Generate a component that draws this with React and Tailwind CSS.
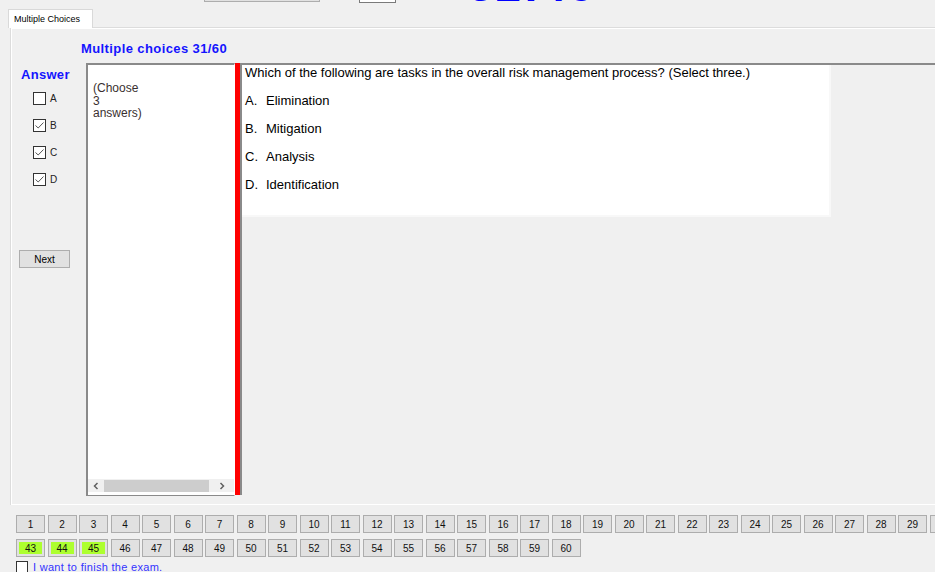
import React from 'react';

const sans = { fontFamily: '"Liberation Sans", Arial, sans-serif' };

const Check = ({ checked }) => (
    <div className="w-[13px] h-[13px] border border-[#333] bg-white flex items-center justify-center">
        {checked && (
            <svg width="11" height="11" viewBox="0 0 11 11">
                <path d="M1.5 5.5 L4.2 8 L9.5 2.5" fill="none" stroke="#555" strokeWidth="1" />
            </svg>
        )}
    </div>
);

const NumButton = ({ n, done }) => (
    <div className="w-[29px] h-[18px] shrink-0 border border-[#adadad] bg-[#e1e1e1] p-[2px] flex">
        <div className={`flex-1 flex items-center justify-center text-[10px] text-[#111] ${done ? 'bg-[#adff2f]' : ''}`}>{n}</div>
    </div>
);

const Arrow = ({ dir }) => (
    <svg width="8" height="8" viewBox="0 0 8 8">
        <path d={dir === 'left' ? 'M5.5 1 L2.5 4 L5.5 7' : 'M2.5 1 L5.5 4 L2.5 7'} fill="none" stroke="#606060" strokeWidth="1.5" />
    </svg>
);

const App = () => {
    const row1 = Array.from({ length: 30 }, (_, i) => i + 1);
    const row2 = Array.from({ length: 18 }, (_, i) => i + 43);
    const options = [['A.', 'Elimination'], ['B.', 'Mitigation'], ['C.', 'Analysis'], ['D.', 'Identification']];

    return (
        <div className="w-[935px] h-[572px] bg-[#f0f0f0] overflow-hidden text-black" style={sans}>
            {/* clipped strip at the top */}
            <div className="h-[9px] overflow-hidden flex items-start">
                <div className="ml-[204px] w-[116px] h-[2px] border-b border-x border-[#adadad] bg-[#e1e1e1]" />
                <div className="ml-[39px] w-[37px] h-[3px] border-b border-x border-[#7a7a7a] bg-white" />
                <div className="ml-[72px] -mt-[32px] text-[46px] leading-[34px] font-bold text-[#0000ff] tracking-[2px]">32:46</div>
            </div>

            {/* tab */}
            <div className="h-[18px] flex">
                <div className="ml-[8px] w-[85px] h-[19px] bg-white border border-b-0 border-[#d9d9d9] text-[9px] pl-[5px] pt-[3px] relative z-10">Multiple Choices</div>
            </div>

            {/* tab panel */}
            <div className="ml-[10px] h-[478px] border-t border-[#d9d9d9] border-l border-[#dcdcdc]">
                <div className="h-full border-t border-l border-white border-b">
                    <div className="h-[34px] pl-[69px] pt-[13px] text-[13px] leading-[14px] font-bold text-[#1414ff] tracking-[0.4px]">Multiple choices 31/60</div>

                    <div className="flex h-[433px]">
                        {/* answer column */}
                        <div className="w-[74px] shrink-0 pt-[5px]">
                            <div className="pl-[9px] text-[13px] leading-[14px] font-bold text-[#1414ff] tracking-[0.3px]">Answer</div>
                            <div className="pl-[21px] mt-[10px] flex flex-col gap-[14px]">
                                {[['A', false], ['B', true], ['C', true], ['D', true]].map(([l, c]) => (
                                    <div key={l} className="flex items-center gap-[4px] h-[13px]">
                                        <Check checked={c} />
                                        <span className="text-[10px] text-[#222]">{l}</span>
                                    </div>
                                ))}
                            </div>
                            <div className="ml-[7px] mt-[64px] w-[51px] h-[18px] border border-[#adadad] bg-[#e1e1e1] flex items-center justify-center text-[10px]">Next</div>
                        </div>

                        {/* left text box */}
                        <div className="w-[149px] shrink-0 border-l-2 border-t-2 border-[#8a8a8a] border-b border-r border-r-white bg-white flex flex-col">
                            <div className="flex-1 pl-[5px] pt-[17px] text-[12px] leading-[12.5px] text-[#3a3030]">
                                (Choose<br />3<br />answers)
                            </div>
                            <div className="h-[13px] mb-[3px] bg-[#f0f0f0] flex items-center">
                                <div className="w-[16px] flex justify-center"><Arrow dir="left" /></div>
                                <div className="w-[105px] h-[12px] bg-[#cdcdcd]" />
                                <div className="flex-1 flex justify-center"><Arrow dir="right" /></div>
                            </div>
                        </div>

                        {/* red bar */}
                        <div className="w-[5px] shrink-0 bg-[#ff0000] h-[432px]" />

                        {/* question area */}
                        <div className="flex-1 h-[432px] border-l-2 border-t-2 border-[#8a8a8a]">
                            <div className="w-[589px] bg-white border-r-2 border-b-2 border-[#f8f8f8] pb-[16px]">
                                <div className="pl-[3px] text-[13px] leading-[16px]">Which of the following are tasks in the overall risk management process? (Select three.)</div>
                                <div className="mt-[6px]">
                                    {options.map(([k, v]) => (
                                        <div key={k} className="h-[28px] flex items-center pl-[3px] text-[13px]">
                                            <span className="w-[21px]">{k}</span>
                                            <span>{v}</span>
                                        </div>
                                    ))}
                                </div>
                            </div>
                        </div>
                    </div>
                </div>
            </div>

            {/* question number buttons */}
            <div className="pl-[16px] mt-[10px] flex flex-col gap-[6px]">
                <div className="flex gap-[2.5px]">
                    {row1.map(n => <NumButton key={n} n={n} />)}
                </div>
                <div className="flex gap-[2.5px]">
                    {row2.map(n => <NumButton key={n} n={n} done={n <= 45} />)}
                </div>
            </div>
            <div className="pl-[16px] mt-[2px] flex items-center gap-[5px]">
                <div className="w-[12px] h-[12px] border border-[#333] bg-white" />
                <span className="text-[11px] text-[#3333ff] tracking-[0.3px]">I want to finish the exam.</span>
            </div>
        </div>
    );
};

export default App;
